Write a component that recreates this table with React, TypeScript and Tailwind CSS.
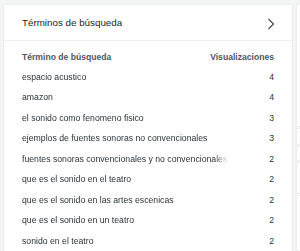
import React from "react";

const rows: [string, number][] = [
  ["espacio acustico", 4],
  ["amazon", 4],
  ["el sonido como fenomeno fisico", 3],
  ["ejemplos de fuentes sonoras no convencionales", 3],
  ["fuentes sonoras convencionales y no convencionales", 2],
  ["que es el sonido en el teatro", 2],
  ["que es el sonido en las artes escenicas", 2],
  ["que es el sonido en un teatro", 2],
  ["sonido en el teatro", 2],
];

const font = { fontFamily: "'Liberation Sans', Arial, sans-serif" };
const fade = "linear-gradient(to right, black calc(100% - 14px), transparent 100%)";

export default function App() {
  return (
    <div className="w-[300px] h-[251px] overflow-hidden bg-[#f3f4f5] flex" style={font}>
      <div className="ml-[3px] mt-[4px] w-[290px] h-[260px] shrink-0 bg-white border border-[#eceded] flex flex-col">
        <div className="h-[36px] pt-[2px] flex items-center justify-between pl-[18px] pr-[17px] border-b border-[#eceded]">
          <span className="text-[9.8px] text-[#1e1e1e]">Términos de búsqueda</span>
          <svg width="8" height="12" viewBox="0 0 8 12" fill="none">
            <path d="M1.5 1 L6.5 6 L1.5 11" stroke="#3c434a" strokeWidth="1.1" />
          </svg>
        </div>
        <div className="pl-[18px] pr-[18px] pt-[8px]">
          <div className="flex justify-between h-[16px] items-center text-[8.6px] font-bold text-[#50575e]">
            <span>Término de búsqueda</span>
            <span>Visualizaciones</span>
          </div>
          <div className="mt-[2px] flex flex-col">
            {rows.map(([term, n]) => (
              <div key={term} className="flex justify-between items-center h-[20.5px] text-[8.7px] text-[#2c3338]">
                <span
                  className="whitespace-nowrap overflow-hidden w-[207px]"
                  style={{ WebkitMaskImage: fade, maskImage: fade }}
                >
                  {term}
                </span>
                <span>{n}</span>
              </div>
            ))}
          </div>
        </div>
      </div>
      <div className="ml-[3px] w-[10px] shrink-0 flex flex-col">
        <div className="mt-[4px] h-[131px] bg-white border border-[#eceded]" />
        <div className="mt-[1px] h-[18px] bg-white border border-[#eceded]" />
        <div className="mt-[1px] h-[16px] bg-white border border-[#eceded]" />
        <div className="mt-[1px] h-[34px] bg-white border border-[#eceded]" />
        <div className="mt-[1px] h-[60px] bg-white border border-[#eceded]" />
      </div>
    </div>
  );
}
